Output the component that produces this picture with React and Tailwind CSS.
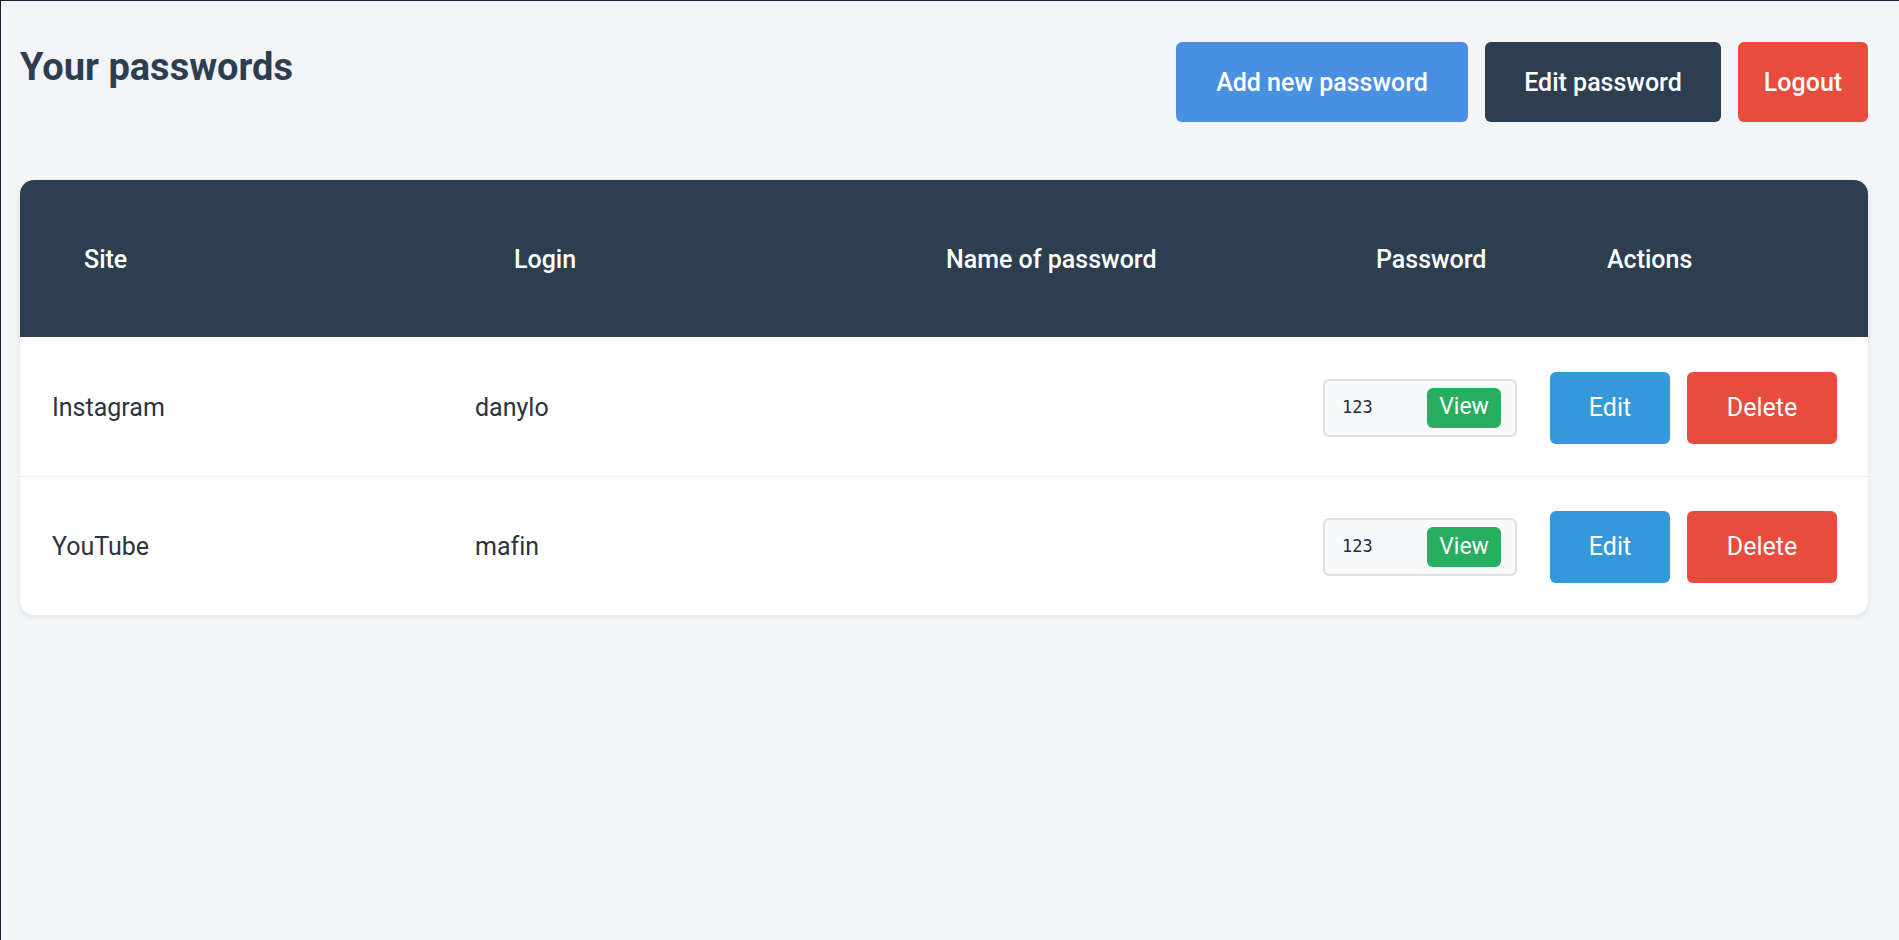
import { useState } from 'react'

const initialPasswords = [
  { id: 1, site: 'Instagram', login: 'danylo', name: '', password: '123' },
  { id: 2, site: 'YouTube', login: 'mafin', name: '', password: '123' },
]

function PasswordRow({ item, last }) {
  const [shown, setShown] = useState(false)

  return (
    <div
      className={`grid grid-cols-[423px_848px_227px_1fr] items-center pl-[32px] pr-[31px] pt-[2px] text-[25px] text-[#2c3440] [font-variant-ligatures:none] ${
        last ? 'h-[138px]' : 'h-[140px] border-b border-[#ececec]'
      }`}
    >
      <span>{item.site}</span>
      <span>{item.login}</span>
      <div className="flex h-[58px] w-[194px] items-center justify-between rounded-[6px] border-2 border-[#e0e0e0] bg-[#f8f9fa] pl-[17px] pr-[14px]">
        <span className="font-['DejaVu_Sans_Mono',monospace] text-[17px] text-[#1f2d3d]">
          {shown ? item.password : '123'}
        </span>
        <button
          onClick={() => setShown(!shown)}
          className="flex h-[40px] w-[74px] items-center justify-center rounded-[6px] bg-[#27ae60] text-[23px] text-white"
        >
          View
        </button>
      </div>
      <div className="flex items-center gap-[17px]">
        <button className="h-[72px] w-[120px] rounded-[6px] bg-[#3498db] text-[25px] text-white">
          Edit
        </button>
        <button className="h-[72px] w-[150px] rounded-[6px] bg-[#e74c3c] text-[25px] text-white">
          Delete
        </button>
      </div>
    </div>
  )
}

export default function App() {
  const [passwords] = useState(initialPasswords)

  return (
    <div className="min-h-[940px] border-l border-t border-[#1c2033] bg-[#f4f5f9] px-[19px] pt-[41px] font-['Roboto',sans-serif]">
      {/* Header */}
      <div className="flex items-start justify-between">
        <h1 className="mt-[3px] text-[38px] font-bold leading-[1.172] text-[#2c3e50]">Your passwords</h1>
        <div className="flex gap-[17px] pr-[12px]">
          <button className="h-[80px] w-[292px] rounded-[6px] bg-[#4a90e2] pt-[1px] text-[25px] font-medium text-white">
            Add new password
          </button>
          <button className="h-[80px] w-[236px] rounded-[6px] bg-[#2c3e50] pt-[1px] text-[25px] font-medium text-white">
            Edit password
          </button>
          <button className="h-[80px] w-[130px] rounded-[6px] bg-[#e74c3c] pt-[1px] text-[25px] font-medium text-white">
            Logout
          </button>
        </div>
      </div>

      {/* Table */}
      <div className="mt-[58px] w-[1848px] overflow-hidden rounded-[14px] bg-white shadow-[0_2px_6px_rgba(0,0,0,0.08)]">
        <div className="grid h-[157px] grid-cols-[430px_432px_430px_231px_1fr] items-center bg-[#2c3e50] pl-[64px] pt-[2px] text-[25px] font-medium text-white">
          <span>Site</span>
          <span>Login</span>
          <span>Name of password</span>
          <span>Password</span>
          <span>Actions</span>
        </div>
        {passwords.map((item, i) => (
          <PasswordRow key={item.id} item={item} last={i === passwords.length - 1} />
        ))}
      </div>
    </div>
  )
}
